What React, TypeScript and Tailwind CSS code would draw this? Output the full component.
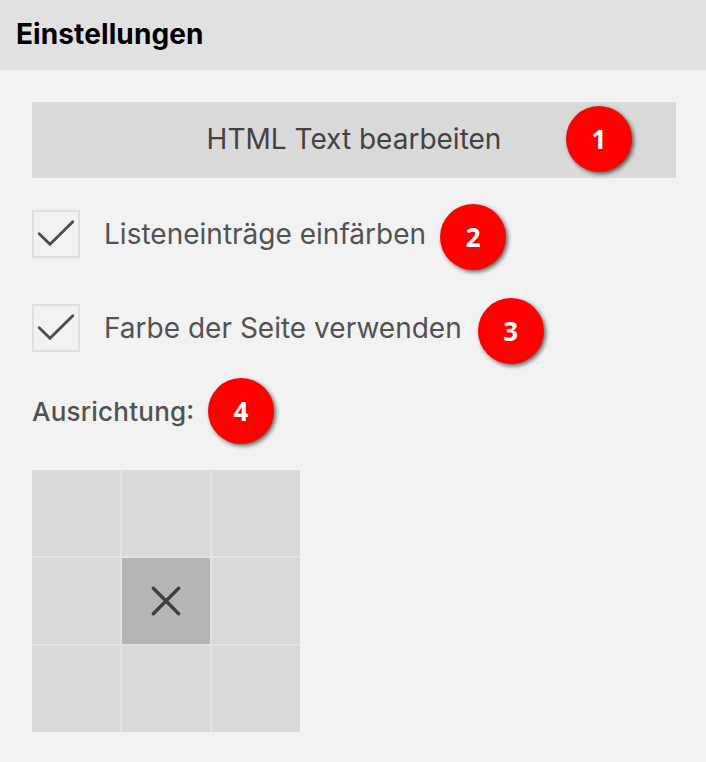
import React from "react";

function Badge({ n, className }: { n: number; className: string }) {
  return (
    <span className={`flex size-[66px] shrink-0 items-center justify-center rounded-full bg-[#ff0000] font-['Open_Sans',sans-serif] text-[26px] font-bold leading-none text-white shadow-[2px_2px_4px_rgba(0,0,0,0.6)] ${className}`}>
      {n}
    </span>
  );
}

function Option({ label, n, gap }: { label: string; n: number; gap: string }) {
  return (
    <div className="flex h-12 items-center">
      <span className="flex size-12 shrink-0 items-center justify-center border-2 border-[#dfdfdf]">
        <svg className="shrink-0" width="44" height="44" viewBox="0 0 44 44" fill="none" stroke="#4d4d4d" strokeWidth="2.9" strokeLinecap="round">
          <path d="M5.2 21.8 L16 32.2 L38.8 9.8" />
        </svg>
      </span>
      <span className="ml-6 whitespace-nowrap text-[28px] leading-none tracking-[0.01px] text-[#525252]">{label}</span>
      <Badge n={n} className={gap} />
    </div>
  );
}

export default function App() {
  return (
    <main className="h-[762px] w-[706px] overflow-hidden bg-[#f2f2f2] font-['Inter',sans-serif]">
      <header className="flex h-[70px] items-center bg-[#e1e1e1] pb-0.5 pl-4 text-[28px] font-bold tracking-[0.1px] text-black">
        Einstellungen
      </header>
      <div className="px-8 pt-8">
        <button className="relative flex h-[76px] w-[644px] items-center justify-center bg-[#d9d9d9] pb-0.5 text-[28px] text-[#424242]">
          HTML Text bearbeiten
          <Badge n={1} className="absolute right-11 top-1" />
        </button>
        <div className="mt-8 flex flex-col gap-[46px]">
          <Option label="Listeneinträge einfärben" n={2} gap="ml-[14px] mt-1.5" />
          <Option label="Farbe der Seite verwenden" n={3} gap="ml-[16px] mt-1.5" />
        </div>
        <div className="mt-[26px] flex h-[66px] items-center text-[26px] font-medium text-[#525252]">
          <span className="w-[162px] whitespace-nowrap tracking-[0.22px]">
            Ausrichtung<span className="[font-feature-settings:'case']">:</span>
          </span>
          <Badge n={4} className="ml-[14px]" />
        </div>
        <div className="mt-[26px] grid h-[262px] w-[268px] grid-cols-3 grid-rows-3 gap-0.5 bg-[#e2e2e2]">
          {Array.from({ length: 9 }, (_, i) => (
            <span key={i} className={`flex items-center justify-center ${i === 4 ? "bg-[#b5b5b5]" : "bg-[#d9d9d9]"}`}>
              {i === 4 && (
                <svg width="32" height="32" viewBox="0 0 32 32" fill="none" stroke="#404040" strokeWidth="3.4" strokeLinecap="round">
                  <path d="M3.3 3.3 L28.7 28.7 M28.7 3.3 L3.3 28.7" />
                </svg>
              )}
            </span>
          ))}
        </div>
      </div>
    </main>
  );
}
